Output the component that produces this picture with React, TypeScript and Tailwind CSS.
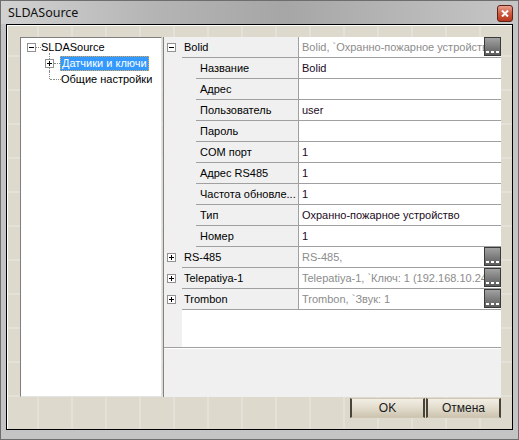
import React from 'react';

type GridRow = {
    name: string;
    value: string;
    cat?: boolean;
    open?: boolean;
    btn?: boolean;
};

const rows: GridRow[] = [
    { name: 'Bolid', value: 'Bolid, `Охранно-пожарное устройство', cat: true, open: true, btn: true },
    { name: 'Название', value: 'Bolid' },
    { name: 'Адрес', value: '' },
    { name: 'Пользователь', value: 'user' },
    { name: 'Пароль', value: '' },
    { name: 'COM порт', value: '1' },
    { name: 'Адрес RS485', value: '1' },
    { name: 'Частота обновле...', value: '1' },
    { name: 'Тип', value: 'Охранно-пожарное устройство' },
    { name: 'Номер', value: '1' },
    { name: 'RS-485', value: 'RS-485,', cat: true, btn: true },
    { name: 'Telepatiya-1', value: 'Telepatiya-1, `Ключ: 1 (192.168.10.24)', cat: true, btn: true },
    { name: 'Trombon', value: 'Trombon, `Звук: 1', cat: true, btn: true },
];

function ExpandBox({ open }: { open: boolean }) {
    return (
        <span className="relative z-10 flex h-[9px] w-[9px] shrink-0 items-center justify-center border border-[#919191] bg-white">
            <svg width="7" height="7" viewBox="0 0 7 7" shapeRendering="crispEdges">
                <rect x="1" y="3" width="5" height="1" fill="#000" />
                {!open && <rect x="3" y="1" width="1" height="5" fill="#000" />}
            </svg>
        </span>
    );
}

function DotsButton() {
    return (
        <span className="flex h-[19px] w-[17px] shrink-0 items-end justify-center gap-[2px] border border-[#3a3a3a] bg-[linear-gradient(#a2a2a2,#5c5c5c)] pb-[2px]">
            <span className="h-[2px] w-[3px] bg-white" />
            <span className="h-[2px] w-[3px] bg-white" />
            <span className="h-[2px] w-[3px] bg-white" />
        </span>
    );
}

function PropertyRow({ r }: { r: GridRow }) {
    return (
        <div className="flex h-[21px]">
            <div className="flex w-[18px] shrink-0 items-center bg-[#f0f0f0] pl-[3px]">
                {r.cat && <ExpandBox open={!!r.open} />}
            </div>
            {!r.cat && <div className="w-[14px] shrink-0 bg-[#f0f0f0]" />}
            <div
                className={`flex shrink-0 items-center overflow-hidden whitespace-nowrap border-b border-r border-[#a0a0a0] bg-[#f0f0f0] text-black ${
                    r.cat ? 'w-[117px] pl-[2px]' : 'w-[103px] pl-[4px]'
                }`}
            >
                {r.name}
            </div>
            <div className="flex min-w-0 flex-1 items-start border-b border-[#a0a0a0] bg-white">
                <span
                    className={`min-w-0 flex-1 overflow-hidden whitespace-nowrap pl-[3px] leading-[20px] ${
                        r.cat ? 'text-[#8c8c8c]' : 'text-[#1c0a1c]'
                    }`}
                >
                    {r.value}
                </span>
                {r.btn && <DotsButton />}
            </div>
        </div>
    );
}

function Tree() {
    return (
        <div className="w-[142px] shrink-0 border-b border-l border-r border-t border-b-[#e4e4e4] border-l-[#7f7f7f] border-r-[#e4e4e4] border-t-[#7f7f7f] bg-white pt-[1px] text-[11px] text-black">
            {/* root */}
            <div className="flex h-[16px] items-center pl-[6px]">
                <ExpandBox open />
                <span className="w-[5px] border-t border-dotted border-[#8a8a8a]" />
                <span>SLDASource</span>
            </div>
            {/* Датчики и ключи */}
            <div className="flex h-[16px] items-center pl-[24px]">
                <div className="relative flex h-full w-[9px] shrink-0 items-center">
                    <span className="absolute bottom-0 left-[4px] top-[-2px] border-l border-dotted border-[#8a8a8a]" />
                    <ExpandBox open={false} />
                </div>
                <span className="w-[6px] border-t border-dotted border-[#8a8a8a]" />
                <span className="border border-dotted border-[#e8a848] bg-[#3399ff] px-[1px] leading-[13px] text-white">
                    Датчики и ключи
                </span>
            </div>
            {/* Общие настройки */}
            <div className="flex h-[16px] items-center pl-[24px]">
                <div className="relative h-full w-[9px] shrink-0">
                    <span className="absolute left-[4px] top-0 h-[8px] border-l border-dotted border-[#8a8a8a]" />
                    <span className="absolute left-[5px] top-[8px] w-[4px] border-t border-dotted border-[#8a8a8a]" />
                </div>
                <span className="w-[7px] border-t border-dotted border-[#8a8a8a]" />
                <span>Общие настройки</span>
            </div>
        </div>
    );
}

function Grid() {
    return (
        <div className="flex min-w-0 flex-1 flex-col border-l border-[#828282] bg-white text-[11px]">
            {rows.map((r) => (
                <PropertyRow key={r.name} r={r} />
            ))}
            <div className="flex flex-1">
                <div className="w-[18px] bg-[#f0f0f0]" />
                <div className="flex-1 bg-white" />
            </div>
            <div className="h-[50px] border-t border-[#a0a0a0] bg-[#f0f0f0] shadow-[inset_0_1px_0_#ffffff]" />
        </div>
    );
}

function WinButton({ label }: { label: string }) {
    return (
        <button className="flex h-[20px] w-[75px] items-center justify-center border-x-2 border-y border-x-[#4a4438] border-y-[#cfc7b4] bg-[linear-gradient(#f2eee4,#e2dccd_50%,#cdc4af)] text-[12px] text-[#1a1a1a]">
            {label}
        </button>
    );
}

export default function App() {
    return (
        <div
            className="flex h-[440px] w-[519px] flex-col border border-[#6e6e6e] bg-[#c4c4c4]"
            style={{ fontFamily: '"Liberation Sans", Arial, sans-serif' }}
        >
            {/* title bar */}
            <div className="flex h-[23px] shrink-0 items-start justify-between bg-[linear-gradient(to_right,#d2d2d2,#b4b4b4_30%,#a6a6a6_55%,#b8b8b8_80%,#c6c6c6)] pl-[7px] pr-[5px]">
                <span
                    className="pt-[3px] text-[12.5px] text-[#111]"
                    style={{ fontFamily: '"Noto Sans", "Open Sans", sans-serif' }}
                >
                    SLDASource
                </span>
                <span className="mt-[4px] flex h-[17px] w-[16px] items-center justify-center rounded-[3px] border border-[#5e2218] bg-[linear-gradient(#e9a08e,#cf5a40_50%,#b8361e)]">
                    <svg width="8" height="7" viewBox="0 0 8 7">
                        <path d="M1 0.5 L7 6.5 M7 0.5 L1 6.5" stroke="#fff" strokeWidth="2" />
                    </svg>
                </span>
            </div>

            {/* body */}
            <div className="mx-[5px] mb-[9px] h-[406px] border border-black">
                <div className="flex h-full flex-col bg-[#ddd9cd] bg-[linear-gradient(90deg,transparent_30px,rgba(255,255,255,0.22)_30px,rgba(255,255,255,0.22)_32px,transparent_32px),linear-gradient(transparent_30px,rgba(255,255,255,0.22)_30px,rgba(255,255,255,0.22)_32px,transparent_32px)] bg-[length:34px_34px] pb-[11px] pl-[13px] pr-[11px] pt-[12px] shadow-[inset_1px_1px_0_#ffffff]">
                    <div className="flex h-[360px] gap-[1px]">
                        <Tree />
                        <Grid />
                    </div>
                    <div className="mt-[1px] flex justify-end gap-[1px]">
                        <WinButton label="OK" />
                        <WinButton label="Отмена" />
                    </div>
                </div>
            </div>
        </div>
    );
}
